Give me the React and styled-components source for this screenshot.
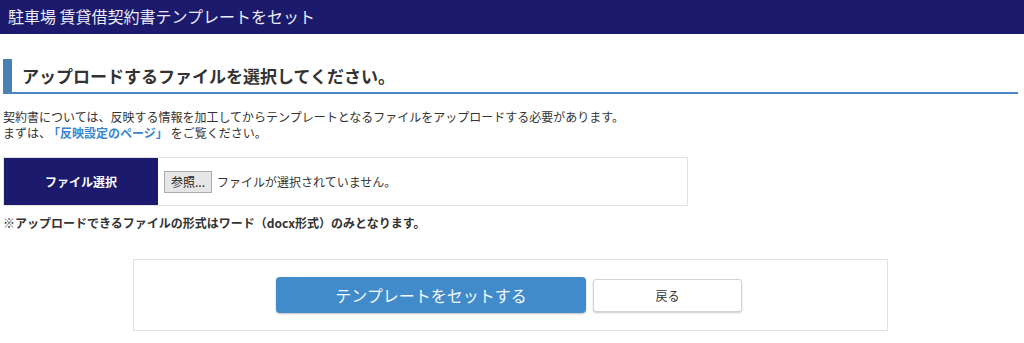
import React from "react";
import styled, { createGlobalStyle } from "styled-components";

const GlobalStyle = createGlobalStyle`
  body {
    margin: 0;
    background: #fff;
    font-family: "Noto Sans CJK JP", "Noto Sans", sans-serif;
    color: #333;
  }
`;

const TitleBar = styled.header`
  height: 34px;
  background-color: #1b1a6c;
  color: #ecebf5;
  font-size: 16px;
  line-height: 32px;
  padding-left: 8px;
  box-sizing: border-box;
`;

const Content = styled.main`
  padding: 25px 6px 0 3px;
`;

const Heading = styled.h2`
  margin: 0;
  height: 35px;
  box-sizing: border-box;
  display: flex;
  align-items: center;
  border-left: 9px solid #4a7fb4;
  border-bottom: 2px solid #4b86c6;
  padding-left: 10px;
  font-size: 17px;
  font-weight: bold;
  color: #333;
`;

const Lead = styled.p`
  margin: 15px 0 0;
  font-size: 12px;
  line-height: 16px;
  color: #333;
`;

const Link = styled.a`
  color: #3b86cf;
  font-weight: bold;
  text-decoration: none;
  margin: 0 3px;
`;

const FileRow = styled.div`
  display: flex;
  width: 685px;
  height: 49px;
  margin-top: 16px;
  border: 1px solid #e3e3e3;
  box-sizing: border-box;
`;

const FileLabel = styled.div`
  width: 154px;
  background-color: #1b1a6c;
  color: #fff;
  font-size: 12px;
  font-weight: bold;
  display: flex;
  align-items: center;
  justify-content: center;
`;

const FileCell = styled.div`
  flex: 1;
  display: flex;
  align-items: center;
  padding-left: 6px;
  font-size: 12px;
  color: #333;
`;

const BrowseButton = styled.button`
  height: 22px;
  padding: 0 6px;
  margin-right: 5px;
  font-family: inherit;
  font-size: 12px;
  color: #222;
  background: #e6e6e6;
  border: 1px solid #acacac;
  border-radius: 0;
`;

const Note = styled.p`
  margin: 8px 0 0;
  font-size: 12px;
  font-weight: bold;
  color: #333;
`;

const ActionBox = styled.div`
  width: 755px;
  height: 72px;
  margin: 28px 0 0 130px;
  border: 1px solid #e0e0e0;
  box-sizing: border-box;
  display: flex;
  align-items: center;
  justify-content: center;
  gap: 7px;
  padding-right: 3px;
`;

const PrimaryButton = styled.button`
  width: 310px;
  height: 36px;
  border: none;
  border-radius: 4px;
  background-color: #428bca;
  color: #f4f8fc;
  font-family: inherit;
  font-size: 16px;
  box-shadow: 0 1px 2px rgba(0, 0, 0, 0.25);
`;

const SecondaryButton = styled.button`
  width: 149px;
  height: 33px;
  border: 1px solid #d3d3d3;
  border-radius: 3px;
  background-color: #fff;
  color: #333;
  font-family: inherit;
  font-size: 12px;
  box-shadow: 0 1px 2px rgba(0, 0, 0, 0.2);
`;

const App = () => {
  return (
    <>
      <GlobalStyle />
      <TitleBar>駐車場 賃貸借契約書テンプレートをセット</TitleBar>
      <Content>
        <Heading>アップロードするファイルを選択してください。</Heading>
        <Lead>
          契約書については、反映する情報を加工してからテンプレートとなるファイルをアップロードする必要があります。
          <br />
          まずは、<Link href="#">「反映設定のページ」</Link>をご覧ください。
        </Lead>
        <FileRow>
          <FileLabel>ファイル選択</FileLabel>
          <FileCell>
            <BrowseButton>参照...</BrowseButton>
            ファイルが選択されていません。
          </FileCell>
        </FileRow>
        <Note>※アップロードできるファイルの形式はワード（docx形式）のみとなります。</Note>
        <ActionBox>
          <PrimaryButton>テンプレートをセットする</PrimaryButton>
          <SecondaryButton>戻る</SecondaryButton>
        </ActionBox>
      </Content>
    </>
  );
};

export default App;
